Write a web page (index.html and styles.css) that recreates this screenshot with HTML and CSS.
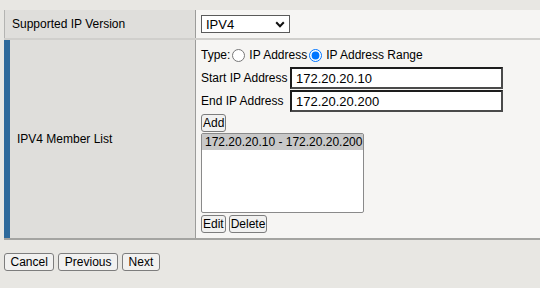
FILE: index.html
```html
<!DOCTYPE html>
<html>
<head>
<meta charset="utf-8">
<link rel="stylesheet" href="styles.css">
</head>
<body>
<div class="panel">
  <div class="row row-version">
    <div class="label">Supported IP Version</div>
    <div class="value">
      <div class="select-wrap">
        <select class="select"><option>IPV4</option></select>
        <svg class="chev" width="10" height="7" viewBox="0 0 10 7"><path d="M1.2 1.3 L5 5.2 L8.8 1.3" fill="none" stroke="#111" stroke-width="2"/></svg>
      </div>
    </div>
  </div>
  <div class="row row-members">
    <div class="label label-accent">IPV4 Member List</div>
    <div class="value stack">
      <div class="type-line">
        <span>Type:</span>
        <input type="radio" name="t" class="radio"><span>IP Address</span>
        <input type="radio" name="t" class="radio" checked><span>IP Address Range</span>
      </div>
      <div class="fields">
        <span class="flabel">Start IP Address</span>
        <input class="text" type="text" value="172.20.20.10">
        <span class="flabel">End IP Address</span>
        <input class="text" type="text" value="172.20.20.200">
      </div>
      <div class="add-row"><button class="btn small">Add</button></div>
      <div class="listbox">
        <div class="opt selected">172.20.20.10 - 172.20.20.200</div>
      </div>
      <div class="btn-row"><button class="btn small">Edit</button><button class="btn small">Delete</button></div>
    </div>
  </div>
</div>
<div class="actions">
  <button class="btn">Cancel</button>
  <button class="btn">Previous</button>
  <button class="btn">Next</button>
</div>
</body>
</html>
```
FILE: styles.css
```css
* { box-sizing: border-box; }
body {
  margin: 0;
  background: #e8e7e3;
  font-family: "Liberation Sans", Arial, sans-serif;
  font-size: 12px;
  color: #000;
}
.panel {
  margin: 10px 0 0 4px;
  border-bottom: 2px solid #a4a4a1;
}
.row {
  display: grid;
  grid-template-columns: 192px 1fr;
}
.row-version {
  height: 30px;
  border-bottom: 2px solid #d0cfcc;
}
.row-members { height: 198px; }
.label {
  background: #dfdedb;
  border-left: 1px solid #b4b4b2;
  border-right: 1px solid #9c9c9a;
  padding-left: 7px;
  display: flex;
  align-items: center;
}
.label-accent { border-left: 6px solid #2f6a9b; }
.value {
  background: #f6f5f3;
  padding-left: 5px;
  display: flex;
  align-items: center;
}
.select-wrap { position: relative; width: 89px; height: 18px; }
.select {
  appearance: none;
  -webkit-appearance: none;
  width: 89px;
  height: 18px;
  border: 1px solid #5a5a5a;
  border-radius: 0;
  background: #fff;
  font-family: inherit;
  font-size: 13px;
  padding: 0 0 0 4px;
  margin: 0;
  color: #000;
}
.chev { position: absolute; right: 5px; top: 6px; pointer-events: none; }
.stack {
  flex-direction: column;
  align-items: flex-start;
  justify-content: flex-start;
  padding-top: 5px;
}
.type-line {
  height: 20px;
  display: flex;
  align-items: center;
  font-size: 12px;
}
.radio {
  width: 13px;
  height: 13px;
  margin: 0 4px 0 2px;
}
.fields {
  margin-top: 2px;
  display: grid;
  grid-template-columns: 89px 213px;
  row-gap: 1px;
  align-items: center;
}
.flabel { white-space: nowrap; }
.text {
  width: 213px;
  height: 22px;
  border: 2px solid;
  border-color: #1d1d1d #4a4a4a #4a4a4a #1d1d1d;
  background: #fff;
  font-family: inherit;
  font-size: 13px;
  padding: 0 4px;
  margin: 0;
  color: #000;
}
.btn {
  font-family: inherit;
  font-size: 12px;
  height: 18px;
  padding: 0 5.5px;
  margin: 0;
  border: 1px solid #7d7d7d;
  border-radius: 3px;
  background: #f1f1f0;
  color: #000;
  line-height: 16px;
}
.btn.small { padding: 0 1px; }
.add-row { margin-top: 2px; }
.listbox {
  margin-top: 1px;
  width: 163px;
  height: 80px;
  border: 1px solid #8a8a8a;
  border-radius: 2px;
  background: #fff;
}
.opt {
  height: 16px;
  line-height: 16px;
  padding-left: 3px;
  white-space: nowrap;
}
.opt.selected { background: #c8c8c8; }
.btn-row { margin-top: 2px; display: flex; gap: 3px; }
.actions {
  margin: 13px 0 0 4px;
  display: flex;
  gap: 4px;
}
```
